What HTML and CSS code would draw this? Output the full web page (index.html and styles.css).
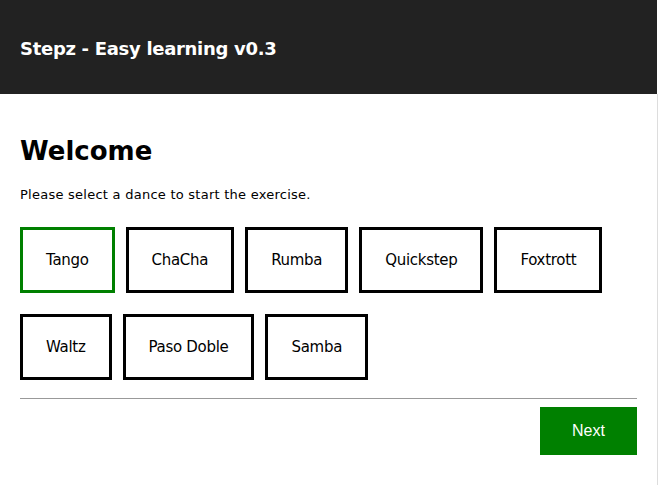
FILE: index.html
```html
<!DOCTYPE html>
<html lang="en">
<head>
    <meta charset="UTF-8">
    <meta name="viewport" content="width=device-width, initial-scale=1.0">
    <title>Stepz - Easy learning</title>
    <link rel="stylesheet" href="styles.css">
</head>
<body>

    <header class="topbar">
        <h1 class="title">Stepz - Easy learning v0.3</h1>
    </header>

    <main class="content">
        <h2 class="welcome">Welcome</h2>
        <p class="intro">Please select a dance to start the exercise.</p>

        <div class="dances">
            <button class="dance selected">Tango</button>
            <button class="dance">ChaCha</button>
            <button class="dance">Rumba</button>
            <button class="dance">Quickstep</button>
            <button class="dance">Foxtrott</button>
            <button class="dance">Waltz</button>
            <button class="dance">Paso Doble</button>
            <button class="dance">Samba</button>
        </div>

        <hr class="divider">

        <div class="actions">
            <button class="next">Next</button>
        </div>
    </main>

<script>
    const dances = document.querySelectorAll('.dance');

    dances.forEach(btn => {
        btn.addEventListener('click', () => {
            dances.forEach(d => d.classList.remove('selected'));
            btn.classList.add('selected');
        });
    });
</script>

</body>
</html>
```

FILE: styles.css
```css
*{
    box-sizing: border-box;
    margin: 0;
    padding: 0;
}

body{
    width: 658px;
    height: 485px;
    font-family: "DejaVu Sans", sans-serif;
    color: #000000;
    background: #ffffff;
    overflow: hidden;
}

.topbar{
    width: 657px;
    height: 94px;
    display: flex;
    align-items: center;
    padding: 0 20px;
    background-color: #222222;
}

.title{
    color: #ffffff;
    font-size: 18px;
    font-weight: bold;
    letter-spacing: -0.3px;
    margin-top: 2px;
}

.content{
    width: 658px;
    height: 391px;
    padding: 40px 20px 0 20px;
    border-right: 1px solid #dddddd;
}

.welcome{
    font-size: 26px;
    font-weight: bold;
    line-height: 34px;
}

.intro{
    margin-top: 19px;
    font-size: 13px;
    letter-spacing: 0.25px;
    line-height: 16px;
}

.dances{
    display: flex;
    flex-wrap: wrap;
    column-gap: 11px;
    row-gap: 21px;
    margin-top: 24px;
}

.dance{
    height: 66px;
    padding: 0 23px;
    background: none;
    border: 3px solid #000000;
    font-family: "DejaVu Sans", sans-serif;
    font-size: 15px;
    letter-spacing: -0.3px;
    color: #000000;
    cursor: pointer;
}

.dance.selected{
    border-color: #008000;
}

.divider{
    margin-top: 18px;
    border: none;
    border-top: 1px solid #999999;
}

.actions{
    display: flex;
    justify-content: flex-end;
    margin-top: 8px;
}

.next{
    width: 97px;
    height: 48px;
    background-color: #008000;
    border: none;
    color: #ffffff;
    font-family: "Liberation Sans", Arial, sans-serif;
    font-size: 16px;
    cursor: pointer;
}
```
